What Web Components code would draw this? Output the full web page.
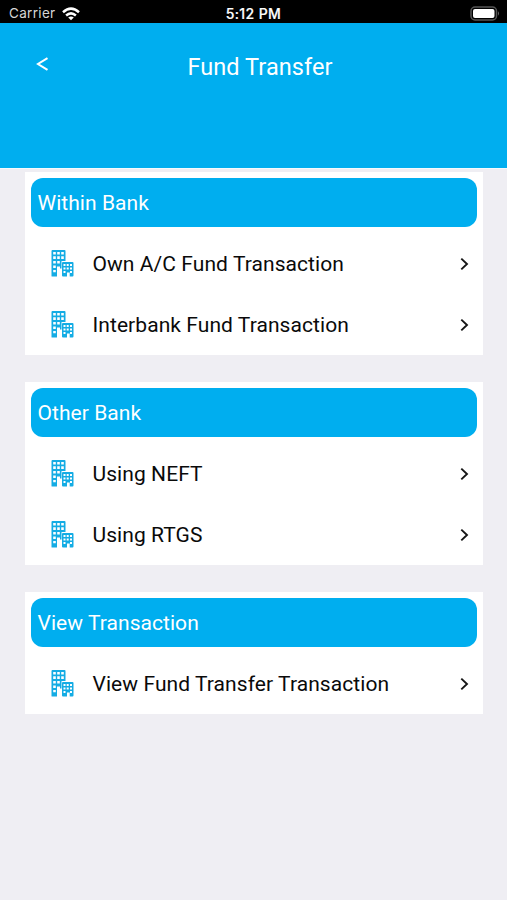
<!DOCTYPE html>
<html lang="en">
<head>
<meta charset="utf-8">
<title>Fund Transfer</title>
<style>
html,body{margin:0;height:100%;background:#efeef3}
body{font-family:Roboto,"Liberation Sans",sans-serif}
</style>
</head>
<body>
<fund-app></fund-app>
<script>
function define(name, html) {
  const t = document.createElement('template');
  t.innerHTML = html;
  customElements.define(name, class extends HTMLElement {
    constructor() {
      super();
      this.attachShadow({ mode: 'open' }).appendChild(t.content.cloneNode(true));
    }
  });
}

define('status-bar', `<style>
:host{display:grid;grid-template-columns:1fr auto 1fr;align-items:center;height:23px;box-sizing:border-box;padding:4px 7px 0 9px;background:#000;color:#fff;font-family:Inter,sans-serif;font-size:13.5px;line-height:19px}
.left{display:flex;align-items:center;gap:6px;color:#d6d6d6}
.carrier{letter-spacing:.32px}
.time{font-weight:500;font-size:14px;letter-spacing:.4px;-webkit-text-stroke:.2px #fff;margin-left:-2px}
.right{display:flex;justify-content:flex-end}
svg{display:block}
</style>
<div class="left"><span class="carrier">Carrier</span>
<svg width="18" height="14" viewBox="0 0 18 14" fill="none" stroke="#fff" stroke-width="2.5"><path d="M1 5.2Q9-2 17 5.2"/><path d="M4.1 8.5Q9 4.2 13.9 8.5"/><path d="M9 13.3L6.2 10.6Q9 8.4 11.8 10.6Z" fill="#fff" stroke="none"/></svg></div>
<span class="time">5:12 PM</span>
<div class="right"><svg width="30" height="15" viewBox="0 0 30 15"><rect x="1" y="1" width="25.5" height="13" rx="4" fill="#000" stroke="#555" stroke-width="1.5"/><rect x="3" y="3" width="21.5" height="9" rx="2" fill="#fff"/><path d="M28 5.3Q30 7.5 28 9.7Z" fill="#666"/></svg></div>`);

define('nav-header', `<style>
:host{display:grid;grid-template-columns:84px 1fr 71px;height:145px;background:#00aeef;color:#fff;align-items:start;box-sizing:border-box}
svg{display:block;margin:34px 0 0 36px}
.title{margin-top:29px;text-align:center;font-size:23.5px;line-height:30px;letter-spacing:.06px}
</style>
<svg width="13" height="14" viewBox="0 0 13 14" fill="none" stroke="#fff" stroke-width="2"><path d="M11.5 1.2L2 7L11.5 12.8"/></svg>
<span class="title"><slot></slot></span>`);

define('menu-card', `<style>
:host{display:flex;flex-direction:column;box-sizing:border-box;padding:6px 6px 0;background:#fff}
.head{display:flex;align-items:center;height:49px;margin-bottom:6px;box-sizing:border-box;padding:1px 6.5px 0;border-radius:12px;background:#00aeef;color:#fff;font-size:21px;letter-spacing:.05px}
</style>
<div class="head"><slot name="heading"></slot></div><slot></slot>`);

define('menu-item', `<style>
:host{display:flex;align-items:center;height:61px;box-sizing:border-box;padding:0 6px 0 20px;color:#0a0a0a;font-size:21px}
.label{flex:1;margin:1px 0 0 18px;letter-spacing:.07px;white-space:nowrap}
svg{display:block}
</style>
<svg width="23.5" height="27" viewBox="0 0 23.5 27"><path fill="#14ace4" fill-rule="evenodd" d="M1.5 0H13.5Q14.5 0 14.5 1V11H10.5V18.5H9V16.5H6V26.5H1Q.5 26.5 .5 26V1Q.5 0 1.5 0ZM2.2 2V4.5H4.8V2ZM6.2 2V4.5H8.8V2ZM10.2 2V4.5H12.8V2ZM2.2 6.3V9H4.8V6.3ZM6.2 6.3V9H8.800V6.3ZM10.2 6.3V9H12.8V6.3ZM2.2 11V13.500H4.8V11ZM6.2 11V13.5H8.8V11ZM2.2 15.5V18H4.8V15.5ZM2.2 20V22.3H4.8V20Z"/><path fill="#14ace4" fill-rule="evenodd" d="M12 12H21.5Q22.5 12 22.5 13V25.5Q22.5 26.5 21.5 26.5H18.700V22.5H16V26.5H12Q11 26.5 11 25.5V13Q11 12 12 12ZM12.500 14V16H14.500V14ZM15.700 14V16H17.700V14ZM19 14V16H21V14ZM12.500 17.500V19.500H14.500V17.500ZM15.700 17.500V19.500H17.700V17.500ZM19 17.500V19.500H21V17.500ZM12.500 21V23H14.500V21ZM19 21V23H21V21Z"/></svg>
<span class="label"><slot></slot></span>
<svg width="12" height="16" viewBox="0 0 12 16" fill="none" stroke="#161616" stroke-width="1.9"><path d="M2.3 2.6L8 8L2.3 13.4"/></svg>`);

define('fund-app', `<style>
:host{display:block;min-height:900px;background:#efeef3}
main{display:flex;flex-direction:column;gap:27px;padding:3px 24px 0 25px;border-top:1px solid #f5fafd}
</style>
<status-bar></status-bar>
<nav-header>Fund Transfer</nav-header>
<main>
<menu-card><span slot="heading">Within Bank</span><menu-item>Own A/C Fund Transaction</menu-item><menu-item>Interbank Fund Transaction</menu-item></menu-card>
<menu-card><span slot="heading">Other Bank</span><menu-item>Using NEFT</menu-item><menu-item>Using RTGS</menu-item></menu-card>
<menu-card><span slot="heading">View Transaction</span><menu-item>View Fund Transfer Transaction</menu-item></menu-card>
</main>`);
</script>
</body>
</html>
